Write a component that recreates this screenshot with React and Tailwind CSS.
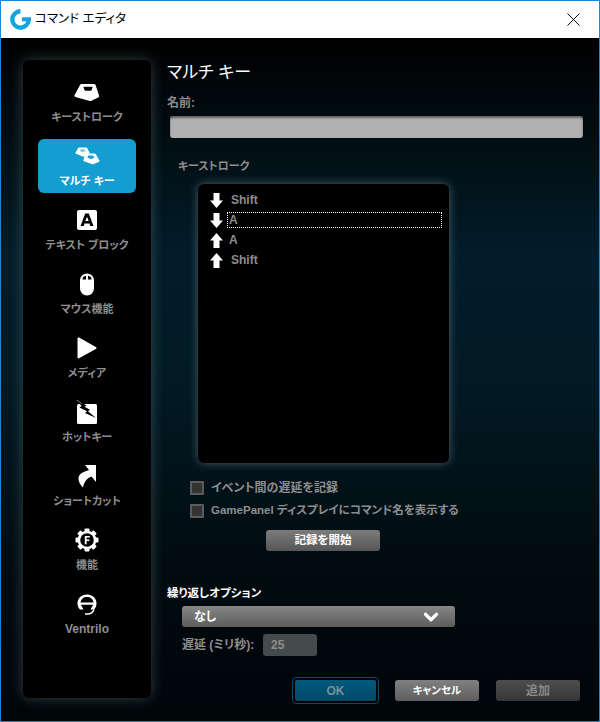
import { ChevronDown } from 'lucide-react'

const jpFont = "font-['Liberation_Sans','Noto_Sans_CJK_JP',sans-serif]"

function LogoG() {
  return (
    <svg width="21" height="21" viewBox="0 0 21 21" fill="none">
      <path d="M10.500 2.300A8.200 8.200 0 1 0 18.700 10.500" stroke="#12a5e2" strokeWidth="4.400" />
      <path d="M21 10.300h-9" stroke="#12a5e2" strokeWidth="4" />
    </svg>
  )
}

function KeyIcon() {
  return (
    <svg width="26" height="19" viewBox="0 0 26 19">
      <path d="M8 1h12c.8 0 1.300.4 1.600 1.100L25 12.500c.3 1-.1 1.600-.9 2l-6.600 3.300c-.6.3-1.100.3-1.700.1L1.500 14C.5 13.600.2 13 .5 12.300L6 2.100C6.400 1.400 7 1 8 1z" fill="#fff" />
      <path d="M10 3.800h8c.4 0 .6.200.5.600L17.500 7.300c-.1.300-.3.400-.6.400h-5.500c-.3 0-.6-.100-.8-.4L9.500 4.400C9.300 4 9.500 3.800 10 3.800z" fill="#000" />
    </svg>
  )
}

function MultiKeyIcon() {
  return (
    <svg width="25" height="18" viewBox="0 0 25 18">
      <path d="M4 .5h7c.6 0 1 .3 1.300.8l2.200 4.200c.3.600.1 1-.4 1.300L9 9.500c-.4.200-.8.200-1.200 0L1 6.800C.5 6.500.3 6 .6 5.500L3 1.200C3.300.7 3.600.5 4 .5z" fill="#fff" />
      <path d="M5.500 2.200h4l1 1.800-2 1H7L5 4z" fill="#7fcbe8" />
      <path d="M11 6.500h8.500c.6 0 1 .3 1.300.8l3.600 6.200c.3.600.1 1-.4 1.300L18.500 17.300c-.4.200-.8.200-1.200 0L9 14.300c-.6-.3-.8-.8-.5-1.300L10 7.300c.2-.5.500-.8 1-.8z" fill="#fff" />
      <path d="M13 8.500h5l1.500 2-2.500 1.200h-2.200l-2.300-1.200z" fill="#139dd0" />
    </svg>
  )
}

function TextIcon() {
  return (
    <svg width="20" height="20" viewBox="0 0 20 20">
      <rect width="20" height="20" rx="2" fill="#fff" />
      <path d="M8.200 3.500h3.600L16.500 16h-3.200l-.8-2.500h-5L6.700 16H3.500zm1.800 3.300L8.300 11h3.400z" fill="#000" fillRule="evenodd" />
    </svg>
  )
}

function MouseIcon() {
  return (
    <svg width="16" height="23" viewBox="0 0 16 23">
      <rect x="1" y="0.500" width="14" height="22" rx="7" fill="#fff" />
      <path d="M3.500 6.500c0-2 1-3.500 3.500-3.700v3.700zM9 2.800c2.500.2 3.500 1.700 3.500 3.700H9z" fill="#000" />
    </svg>
  )
}

function PlayIcon() {
  return (
    <svg width="20" height="22" viewBox="0 0 20 22">
      <path d="M2 .5c-.8-.2-1.500.3-1.500 1.200v18.600c0 .9.700 1.400 1.500 1l16.800-9.200c1-.6 1-1.600 0-2.100z" fill="#fff" />
    </svg>
  )
}

function HotkeyIcon() {
  return (
    <svg width="22" height="24" viewBox="0 0 22 24">
      <rect x="1" y="4" width="20" height="20" rx="1.500" fill="#fff" />
      <path d="M1 0l9.500 5.500-2 1.300 5.500 3-2 1.500L20 18l-11-5 2-1.700L3.500 7.500l2-1.500z" fill="#000" />
      <path d="M1 0l4.500 3.500" stroke="#888" strokeWidth="1" />
    </svg>
  )
}

function ShortcutIcon() {
  return (
    <svg width="18" height="23" viewBox="0 0 18 23">
      <path d="M7 0H18V17L13.500 11.500C9 13 6 17 5 22.500C1.500 19-.5 15 1 11C2.500 8 6 6.500 11 5z" fill="#fff" />
    </svg>
  )
}

function GearIcon() {
  const teeth = [0, 45, 90, 135, 180, 225, 270, 315]
  return (
    <svg width="24" height="24" viewBox="0 0 24 24">
      {teeth.map((deg) => (
        <rect key={deg} x="9.500" y="0.500" width="5" height="5" rx="1" fill="#fff" transform={`rotate(${deg} 12 12)`} />
      ))}
      <circle cx="12" cy="12" r="9.300" fill="#fff" />
      <circle cx="12" cy="12" r="6.800" fill="#000" />
      <path d="M9.800 8h5v1.500h-3.200v2h2.800V13h-2.800v3.200H9.800z" fill="#fff" />
    </svg>
  )
}

function HeadsetIcon() {
  return (
    <svg width="20" height="21" viewBox="0 0 20 21">
      <path d="M10 .5C4.500.5.500 4.300.500 9.500c0 2.500 1 4.500 2.500 6h3.500L5 11.500h10l-1.500 4h3.500c1.500-1.500 2.500-3.500 2.500-6C19.500 4.300 15.500.5 10 .5z" fill="#fff" />
      <path d="M3.500 8.500C4 5 6.500 3 10 3s6 2 6.500 5.500z" fill="#000" />
      <path d="M3.800 10.800h12.400l-3 4.700H11l-1-1.400-1 1.400H6.800z" fill="#000" />
      <path d="M17 15.500c-1 2.700-3.400 4.500-6.500 4.500H8" stroke="#fff" strokeWidth="1.500" fill="none" />
    </svg>
  )
}

function ArrowIcon({ up }) {
  return (
    <svg width="13" height="15" viewBox="0 0 13 15" className={up ? '' : 'rotate-180'}>
      <path d="M6.500 0L13 7.500H9.500V15h-6V7.500H0z" fill="#fff" />
    </svg>
  )
}

function NavItem({ icon, label, active, latin }) {
  return (
    <div className={`flex h-[54px] w-[98px] flex-col items-center justify-between rounded-md pt-[5px] pb-[4px] ${active ? 'bg-[#139dd0]' : ''}`}>
      <div className="flex h-6 items-center justify-center">{icon}</div>
      <span className={`leading-4 font-bold whitespace-nowrap ${latin ? 'text-[12px]' : 'text-[11px]'} ${active ? 'text-white' : 'text-[#8e8e8e]'}`}>{label}</span>
    </div>
  )
}

function Sidebar() {
  const items = [
    { label: 'キーストローク', icon: <KeyIcon /> },
    { label: 'マルチ キー', icon: <MultiKeyIcon />, active: true },
    { label: 'テキスト ブロック', icon: <TextIcon /> },
    { label: 'マウス機能', icon: <MouseIcon /> },
    { label: 'メディア', icon: <PlayIcon /> },
    { label: 'ホットキー', icon: <HotkeyIcon /> },
    { label: 'ショートカット', icon: <ShortcutIcon /> },
    { label: '機能', icon: <GearIcon /> },
    { label: 'Ventrilo', icon: <HeadsetIcon />, latin: true },
  ]
  return (
    <aside className="flex h-[638px] w-[128px] shrink-0 flex-col items-center gap-[10px] rounded-md bg-black pt-[15px] shadow-[0_0_14px_rgba(140,170,175,0.35)]">
      {items.map((item) => (
        <NavItem key={item.label} {...item} />
      ))}
    </aside>
  )
}

function Checkbox({ label, small }) {
  return (
    <label className="flex h-[23px] items-center gap-[7px]">
      <span className="size-[14px] rounded-[1px] border-2 border-[#5c5c5c] bg-[#333333]" />
      <span className={`font-bold whitespace-nowrap text-[#8e8e8e] ${small ? 'text-[11.5px]' : 'text-[12px]'}`}>{label}</span>
    </label>
  )
}

function KeyRow({ up, label, focused }) {
  return (
    <div className="flex h-5 items-center">
      <div className="flex w-[29px] shrink-0 justify-center pl-[8px]"><ArrowIcon up={up} /></div>
      <span className={`flex h-[16px] flex-1 items-center text-[12px] font-bold text-[#8e8e8e] ${focused ? 'border border-dotted border-white' : 'border border-transparent'} ${label === 'Shift' ? 'pl-[3px]' : 'pl-[1px]'}`}>
        {label}
      </span>
    </div>
  )
}

export default function App() {
  return (
    <div className={`flex h-[722px] w-[600px] flex-col border border-[#1c86d6] [font-feature-settings:'palt'] ${jpFont}`}>
      <header className="flex h-[37px] shrink-0 items-center justify-between bg-white pr-[19px] pl-[9px]">
        <div className="flex items-center gap-[4px]">
          <LogoG />
          <span className="text-[12.500px] text-black">コマンド エディタ</span>
        </div>
        <svg width="13" height="13" viewBox="0 0 13 13" stroke="#000" strokeWidth="1">
          <path d="M.5.5l12 12M12.500.5l-12 12" />
        </svg>
      </header>

      <div className="flex flex-1 gap-[16px] bg-[linear-gradient(180deg,#000000_0%,#021d29_32%,#021a24_50%,#010b10_78%,#000508_100%)] pt-[22px] pl-[22px]">
        <Sidebar />

        <main className="flex w-[417px] flex-col">
          <h1 className="h-[26px] text-[17px] leading-[26px] text-white">マルチ キー</h1>
          <p className="mt-[9px] h-[16px] text-[12px] leading-[16px] font-bold text-[#8e8e8e]">名前:</p>
          <div className="mt-[5px] ml-[3px] h-[22px] w-[413px] rounded-[3px] bg-[#b0b0b0] shadow-[inset_0_2px_2px_rgba(0,0,0,0.45)]" />

          <p className="mt-[20px] ml-[11px] h-[16px] text-[11px] leading-[16px] font-bold text-[#8e8e8e]">キーストローク</p>
          <div className="mt-[10px] ml-[31px] h-[279px] w-[251px] rounded-md bg-black pt-[6px] pr-[7px] shadow-[0_0_10px_rgba(150,190,200,0.45)]">
            <KeyRow label="Shift" />
            <KeyRow label="A" focused />
            <KeyRow up label="A" />
            <KeyRow up label="Shift" />
          </div>

          <div className="mt-[13px] ml-[23px] flex flex-col">
            <Checkbox label="イベント間の遅延を記録" />
            <Checkbox small label="GamePanel ディスプレイにコマンド名を表示する" />
          </div>
          <button type="button" className="mt-[8px] ml-[99px] h-[21px] w-[114px] rounded-[3px] bg-[linear-gradient(180deg,#7c7c7c,#565656)] text-[11.500px] font-bold text-white">
            記録を開始
          </button>

          <p className="mt-[34px] h-[16px] text-[11.500px] leading-[16px] font-bold text-white">繰り返しオプション</p>
          <div className="mt-[5px] ml-[15px] flex h-[21px] w-[273px] items-center justify-between rounded-[3px] bg-[linear-gradient(180deg,#868686,#5c5c5c)] pr-[13px] pl-[12px] text-[12px] font-bold text-white">
            <span>なし</span>
            <ChevronDown size={22} strokeWidth={3.500} />
          </div>
          <div className="mt-[7px] ml-[15px] flex items-center gap-[9px]">
            <span className="w-[72px] text-[12px] font-bold whitespace-nowrap text-[#8e8e8e]">遅延 (ミリ秒):</span>
            <span className="flex h-[22px] w-[54px] items-center rounded-[3px] bg-[#454a4d] pl-[8px] text-[12px] font-bold text-[#8e8e8e]">25</span>
          </div>

          <div className="mt-[21px] ml-[125px] flex items-center gap-[16px]">
            <button type="button" className="h-[27px] w-[87px] rounded-[4px] border border-[#064a68] p-[1px]">
              <span className="flex h-full items-center justify-center rounded-[3px] border border-black bg-[linear-gradient(180deg,#015a7d,#014a66)] text-[12px] font-bold text-[#7d8f96]">OK</span>
            </button>
            <button type="button" className="h-[21px] w-[84px] rounded-[3px] bg-[linear-gradient(180deg,#808080,#5e5e5e)] text-[10.500px] font-bold text-white">
              キャンセル
            </button>
            <button type="button" className="ml-[1px] h-[21px] w-[84px] rounded-[3px] bg-[linear-gradient(180deg,#4e4e4e,#363636)] text-[12px] font-bold text-[#8a8a8a]">
              追加
            </button>
          </div>
        </main>
      </div>
    </div>
  )
}
